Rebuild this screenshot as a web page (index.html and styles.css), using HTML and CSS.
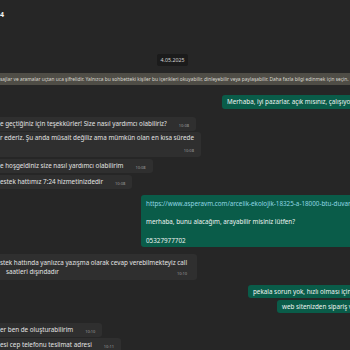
FILE: index.html
```html
<!DOCTYPE html>
<html lang="tr">
<head>
  <meta charset="utf-8" />
  <title>Sohbet</title>
  <link rel="stylesheet" href="styles.css">
</head>
<body>
  <div class="header"><span class="title">4</span></div>
  <div class="chat">
    <div class="date"><span>4.05.2025</span></div>
    <div class="notice">sajlar ve aramalar uçtan uca şifrelidir. Yalnızca bu sohbetteki kişiler bu içerikleri okuyabilir, dinleyebilir veya paylaşabilir. Daha fazla bilgi edinmek için seçin.</div>

    <div class="msg out out-1"><span>Merhaba, iyi pazarlar. açık mısınız, çalışıyor musunuz?</span></div>

    <div class="msg in in-1"><span>e geçtiğiniz için teşekkürler! Size nasıl yardımcı olabiliriz?</span><span class="time">10:08</span></div>
    <div class="msg in stacked">
      <span>r ederiz. Şu anda müsait değiliz ama mümkün olan en kısa sürede</span>
      <span class="time">10:08</span>
    </div>
    <div class="msg in"><span>e hoşgeldiniz size nasıl yardımcı olabilirim</span><span class="time">10:08</span></div>
    <div class="msg in"><span>estek hattımız 7:24 hizmetinizdedir</span><span class="time">10:08</span></div>

    <div class="msg out out-2 multi">
      <a class="link">https://www.asperavm.com/arcelik-ekolojik-18325-a-18000-btu-duvar-tipi-klima</a>
      <span class="gap"></span>
      <span>merhaba, bunu alacağım, arayabilir misiniz lütfen?</span>
      <span class="gap"></span>
      <span>05327977702</span>
    </div>

    <div class="msg in two-line">
      <span>stek hattında yanlızca yazışma olarak cevap verebilmekteyiz call</span>
      <span class="indent">saatleri dışındadır</span>
      <span class="time">10:10</span>
    </div>

    <div class="msg out out-3 slim"><span>pekala sorun yok, hızlı olması için sipariş veriyorum</span></div>
    <div class="msg out out-4 slim"><span>web sitenizden sipariş verdim</span></div>

    <div class="msg in in-6"><span>er ben de oluşturabilirim</span><span class="time">10:10</span></div>
    <div class="msg in in-7"><span>esi cep telefonu teslimat adresi</span><span class="time">10:11</span></div>
  </div>
</body>
</html>
```

FILE: styles.css
```css
html, body { margin: 0; width: 350px; height: 350px; overflow: hidden; }
body { background: #262626; color: #e2e2e2; font-family: "Noto Sans", "Open Sans", sans-serif; }

.header { height: 29px; display: flex; align-items: center; }
.title { font-size: 7px; line-height: 8px; font-weight: bold; color: #f4f4f4; }

.chat { display: flex; flex-direction: column; align-items: flex-start; }

.date { align-self: stretch; display: flex; justify-content: center; padding-right: 5px; margin-top: 25px; }
.date span { background: #1b1b1b; color: #d4d4d4; font-size: 5.3px; line-height: 12px; padding: 0 3px; border-radius: 2px; }

.notice { align-self: stretch; margin-top: 7px; background: #4f4d46; color: #d9d7cf; font-size: 4.85px; line-height: 12px; white-space: nowrap; overflow: hidden; }

.msg { display: flex; align-items: flex-end; gap: 12px; margin-top: 2px; padding: 3px 7px 3px 0; font-size: 6.3px; line-height: 8px; white-space: nowrap; }
.in { background: #2f2f2f; border-radius: 0 3px 3px 0; }
.out { background: #0a5c49; color: #eef3f1; padding-left: 5px; padding-right: 0; border-radius: 3px 0 0 3px; }
.time { font-size: 4px; line-height: 5px; color: #9b9b9b; }

.msg.in-1 { margin-top: 8px; }
.msg.stacked { flex-direction: column; align-items: flex-end; gap: 6px; margin-top: 1px; padding-top: 2px; padding-bottom: 4px; }
.stacked > span:first-child { align-self: flex-start; }

.msg.out-1 { margin-left: 222px; margin-top: 10px; }
.msg.out-2 { margin-left: 141px; margin-top: 6px; }
.msg.out-3 { margin-left: 248px; margin-top: 5.5px; }
.msg.out-4 { margin-left: 277px; }

.msg.multi { flex-direction: column; align-items: flex-start; gap: 0; padding-top: 4px; padding-bottom: 2px; line-height: 9.2px; }
.multi .gap { height: 9.2px; }
.link { color: #8fd6e4; }

.msg.two-line { flex-direction: column; align-items: flex-start; gap: 0; margin-top: 7px; padding: 4px 10px 4px 0; line-height: 9px; }
.two-line .time { align-self: flex-end; margin-top: -5px; }
.indent { padding-left: 6px; }

.msg.slim { padding-top: 2.5px; padding-bottom: 2.5px; }
.msg.in-6 { margin-top: 9.5px; }
.msg.in-7 { margin-top: 1px; }
```
